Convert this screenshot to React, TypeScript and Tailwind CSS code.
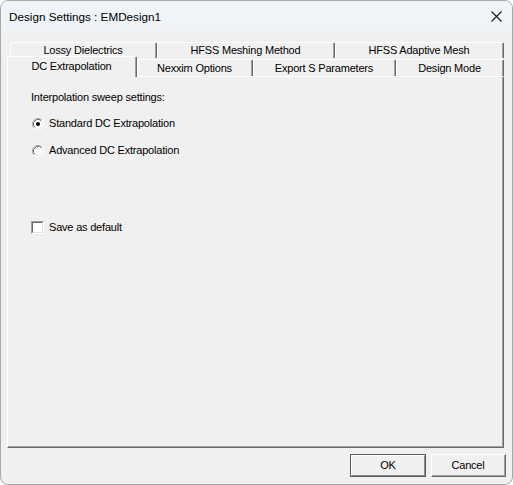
import React from "react";

const font = { fontFamily: '"Liberation Sans", Arial, sans-serif' };

function BackTab({ label, w }: { label: string; w: string }) {
  return (
    <div className={`${w} h-[16px] border-t border-l border-white border-r border-r-[#696969] rounded-tl-[2px] rounded-tr-[2px]`}>
      <div className="h-full border-r border-[#a0a0a0] flex items-center justify-center text-[11px] tracking-[-0.2px] leading-none text-black">
        {label}
      </div>
    </div>
  );
}

function FrontTab({ label, w }: { label: string; w: string }) {
  return (
    <div className={`${w} h-[17px] border-t border-l border-white border-r border-r-[#696969] rounded-tl-[2px] rounded-tr-[2px]`}>
      <div className="h-full border-r border-[#a0a0a0] flex items-center justify-center text-[11px] tracking-[-0.2px] leading-none text-black pt-[1px]">
        {label}
      </div>
    </div>
  );
}

function Radio({ checked }: { checked?: boolean }) {
  return (
    <svg width="12" height="12" viewBox="0 0 12 12" className="shrink-0">
      <circle cx="6" cy="6" r="5.5" fill="#ffffff" />
      <path d="M2.11 9.89 A5.5 5.5 0 0 1 9.89 2.11" fill="none" stroke="#a0a0a0" strokeWidth="1" />
      <path d="M9.89 2.11 A5.5 5.5 0 0 1 2.11 9.89" fill="none" stroke="#ffffff" strokeWidth="1" />
      <path d="M2.82 9.18 A4.5 4.5 0 0 1 9.18 2.82" fill="none" stroke="#696969" strokeWidth="1" />
      <path d="M9.18 2.82 A4.5 4.5 0 0 1 2.82 9.18" fill="none" stroke="#e3e3e3" strokeWidth="1" />
      {checked && <circle cx="6" cy="6" r="2" fill="#000000" />}
    </svg>
  );
}

export default function App() {
  return (
    <div className="w-[513px] h-[485px] bg-white" style={font}>
      <div className="w-[513px] h-[485px] flex flex-col border border-[#a8a8a8] rounded-[8px] overflow-hidden bg-[#f0f0f0]">
        {/* title bar */}
        <div className="h-[30px] shrink-0 bg-[#eff4f9] flex items-center justify-between pl-[8px] pr-[10px]">
          <span className="text-[11.7px] text-black leading-none pt-[1px]">Design Settings : EMDesign1</span>
          <svg width="11" height="11" viewBox="0 0 11 11" className="mt-[1px]">
            <path d="M0.5 0.5 L10.5 10.5 M10.5 0.5 L0.5 10.5" stroke="#1a1a1a" strokeWidth="1.1" />
          </svg>
        </div>

        {/* body */}
        <div className="flex flex-col pl-[6px] pt-[11px]">
          <div className="flex ml-[3px]">
            <BackTab label="Lossy Dielectrics" w="w-[147px]" />
            <BackTab label="HFSS Meshing Method" w="w-[178px]" />
            <BackTab label="HFSS Adaptive Mesh" w="w-[169px]" />
          </div>
          <div className="flex items-end h-[20px] -mt-[2px] relative z-10 w-[497px]">
            <div className="w-[130px] h-[21px] -mb-[1px] bg-[#f0f0f0] border-t border-l border-white border-r border-r-[#696969] rounded-tl-[2px] rounded-tr-[2px]">
              <div className="h-full border-r border-[#a0a0a0] flex items-start justify-center text-[11px] tracking-[-0.2px] leading-none text-black pt-[4px]">
                DC Extrapolation
              </div>
            </div>
            <FrontTab label="Nexxim Options" w="w-[116px]" />
            <FrontTab label="Export S Parameters" w="w-[143px]" />
            <FrontTab label="Design Mode" w="w-[108px]" />
          </div>
          <div className="w-[497px] h-[372px] border-t border-l border-white border-r border-b border-r-[#696969] border-b-[#696969]">
            <div className="h-full border-r border-b border-[#a0a0a0] flex flex-col pl-[23px] pt-[14px] text-[11px] tracking-[-0.2px] text-black leading-[13px]">
              <div>Interpolation sweep settings:</div>
              <div className="flex items-center mt-[13px] h-[13px]">
                <div className="w-[18px] pl-[1px] flex items-center"><Radio checked /></div>
                <span>Standard DC Extrapolation</span>
              </div>
              <div className="flex items-center mt-[14px] h-[13px]">
                <div className="w-[18px] pl-[1px] flex items-center"><Radio /></div>
                <span>Advanced DC Extrapolation</span>
              </div>
              <div className="flex items-center mt-[63px] h-[13px] pt-[1px]">
                <div className="w-[18px] flex items-center">
                  <div className="w-[13px] h-[13px] border-t border-l border-[#a0a0a0] border-r border-b border-r-white border-b-white">
                    <div className="w-full h-full bg-white border-t border-l border-[#696969] border-r border-b border-r-[#e3e3e3] border-b-[#e3e3e3]" />
                  </div>
                </div>
                <span>Save as default</span>
              </div>
            </div>
          </div>
          <div className="flex justify-end gap-[5px] pr-[6px] mt-[6px]">
            <button className="w-[76px] h-[23px] border border-[#5a5a5a] bg-[#f0f0f0] p-0">
              <div className="w-full h-full border-t border-l border-white border-r border-b border-r-[#8a8a8a] border-b-[#8a8a8a] flex items-center justify-center text-[11px] tracking-[-0.2px] text-black leading-none">
                OK
              </div>
            </button>
            <button className="w-[75px] h-[23px] border-t border-l border-white border-r border-b border-r-[#696969] border-b-[#696969] bg-[#f0f0f0] p-0">
              <div className="w-full h-full border-r border-b border-[#a0a0a0] flex items-center justify-center text-[11px] tracking-[-0.2px] text-black leading-none">
                Cancel
              </div>
            </button>
          </div>
        </div>
      </div>
    </div>
  );
}
